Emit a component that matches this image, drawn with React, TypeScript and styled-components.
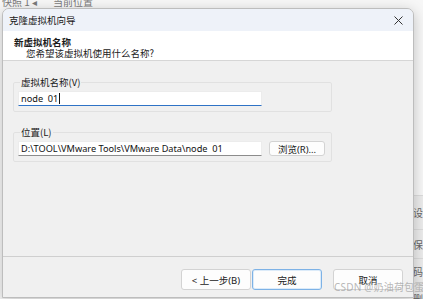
import React from "react";
import styled, { createGlobalStyle } from "styled-components";

const Global = createGlobalStyle`
  html, body { margin: 0; padding: 0; }
  body {
    background: #f6f6f6;
    font-family: "Noto Sans", "Noto Sans CJK SC", sans-serif;
  }
  * { box-sizing: border-box; }
`;

const Desktop = styled.div`
  position: relative;
  width: 423px;
  height: 299px;
  overflow: hidden;
  background: #f7f7f7;
  display: flex;
  flex-direction: column;
`;

const TopStrip = styled.div`
  display: flex;
  gap: 16px;
  margin-top: -6px;
  padding-left: 2px;
  height: 16px;
  font-size: 10px;
  line-height: 16px;
  color: #7a7a7a;
  font-family: "Noto Sans CJK SC", sans-serif;
`;

const SideColumn = styled.div`
  margin-left: auto;
  margin-top: 185px;
  width: 10px;
  display: flex;
  flex-direction: column;
  background: #ececec;
  flex: 1;
`;

const SideRow = styled.div<{ $h: number }>`
  height: ${(p) => p.$h}px;
  flex-shrink: 0;
  border-top: 1px solid #dcdcdc;
  font-size: 10px;
  line-height: ${(p) => p.$h}px;
  color: #666;
  white-space: nowrap;
  overflow: hidden;
  font-family: "Noto Sans CJK SC", sans-serif;
`;

const Window = styled.div`
  position: absolute;
  left: 2px;
  top: 8px;
  width: 412px;
  height: 290px;
  border: 1px solid #bdbdbd;
  border-radius: 7px 7px 0 0;
  background: #f0f0f0;
  box-shadow: 0 3px 14px rgba(0, 0, 0, 0.22);
  display: flex;
  flex-direction: column;
  overflow: hidden;
  font-size: 9.5px;
  color: #1a1a1a;
`;

const TitleBar = styled.div`
  height: 22px;
  background: #eef2f9;
  display: flex;
  align-items: center;
  justify-content: space-between;
  padding: 0 8px 0 6px;
  font-family: "Noto Sans CJK SC", sans-serif;
  font-size: 9.5px;
`;

const CloseBtn = styled.div`
  width: 14px;
  height: 14px;
  display: flex;
  align-items: center;
  justify-content: center;
`;

const Header = styled.div`
  background: #ffffff;
  height: 30px;
  padding: 6px 0 0 11px;
  border-bottom: 1px solid #d6d6d6;
  font-family: "Noto Sans CJK SC", sans-serif;
  line-height: 11px;
`;

const Heading = styled.div`
  font-weight: 700;
`;

const SubHeading = styled.div`
  padding-left: 12px;
  color: #222;
`;

const Body = styled.div`
  flex: 1;
  padding: 15px 0 0 10px;
  display: flex;
  flex-direction: column;
  gap: 14px;
  border-bottom: 1px solid #cfcfcf;
`;

const Group = styled.fieldset`
  width: 319px;
  margin: 0;
  padding: 3px 0 5px 4px;
  border: 1px solid #e1e1e1;
  border-radius: 2px;
`;

const Legend = styled.legend`
  padding: 0 1px;
  margin-left: 2px;
  line-height: 12px;
  font-family: "Noto Sans CJK SC", sans-serif;
  font-size: 9.5px;
`;

const FieldRow = styled.div`
  display: flex;
  gap: 7px;
  align-items: center;
`;

const Field = styled.div<{ $focused?: boolean }>`
  width: 244px;
  height: 15px;
  background: #ffffff;
  border: 1px solid #ececec;
  border-bottom: 1px solid ${(p) => (p.$focused ? "#2f73c6" : "#8c8c8c")};
  padding-left: 2px;
  display: flex;
  align-items: center;
  white-space: pre;
  font-size: 9.2px;
  color: #111;
`;

const Caret = styled.span`
  display: inline-block;
  width: 1px;
  height: 11px;
  background: #111;
  margin-left: 1px;
`;

const Button = styled.div<{ $primary?: boolean; $w: number; $h: number }>`
  width: ${(p) => p.$w}px;
  height: ${(p) => p.$h}px;
  background: #fdfdfd;
  border: 1px solid ${(p) => (p.$primary ? "#7db2e6" : "#d3d3d3")};
  box-shadow: ${(p) => (p.$primary ? "inset 0 0 0 1px #dcebf9" : "none")};
  border-radius: 3px;
  display: flex;
  align-items: center;
  justify-content: center;
  font-family: "Noto Sans", "Noto Sans CJK SC", sans-serif;
  font-size: 9.5px;
  color: #1a1a1a;
`;

const Footer = styled.div`
  height: 40px;
  display: flex;
  align-items: flex-start;
  justify-content: flex-end;
  padding: 12px 10px 0 0;
`;

const ButtonPair = styled.div`
  display: flex;
  gap: 1px;
  margin-right: 11px;
`;

const Watermark = styled.div`
  position: absolute;
  left: 334px;
  top: 280px;
  font-size: 10px;
  line-height: 14px;
  color: rgba(160, 160, 160, 0.75);
  font-family: "Noto Sans", "Noto Sans CJK SC", sans-serif;
  white-space: nowrap;
  letter-spacing: 0.2px;
`;

export default function App() {
  return (
    <>
      <Global />
      <Desktop>
        <TopStrip>
          <span>快照 1 ◂</span>
          <span>当前位置</span>
        </TopStrip>
        <SideColumn>
          <SideRow $h={34}>设也</SideRow>
          <SideRow $h={29}>保</SideRow>
          <SideRow $h={25}>码P</SideRow>
          <SideRow $h={30}>删</SideRow>
        </SideColumn>
        <Window>
          <TitleBar>
            <span>克隆虚拟机向导</span>
            <CloseBtn>
              <svg width="9" height="9" viewBox="0 0 9 9">
                <path d="M0.5 0.5 L8.5 8.5 M8.5 0.5 L0.5 8.5" stroke="#333" strokeWidth="1" />
              </svg>
            </CloseBtn>
          </TitleBar>
          <Header>
            <Heading>新虚拟机名称</Heading>
            <SubHeading>您希望该虚拟机使用什么名称?</SubHeading>
          </Header>
          <Body>
            <Group>
              <Legend>虚拟机名称(V)</Legend>
              <Field $focused>
                node  01
                <Caret />
              </Field>
            </Group>
            <Group>
              <Legend>位置(L)</Legend>
              <FieldRow>
                <Field>{"D:\\TOOL\\VMware Tools\\VMware Data\\node  01"}</Field>
                <Button $w={56} $h={15}>浏览(R)...</Button>
              </FieldRow>
            </Group>
          </Body>
          <Footer>
            <ButtonPair>
              <Button $w={70} $h={21}>&lt; 上一步(B)</Button>
              <Button $w={70} $h={21} $primary>完成</Button>
            </ButtonPair>
            <Button $w={70} $h={21}>取消</Button>
          </Footer>
        </Window>
        <Watermark>CSDN @奶油荷包蛋</Watermark>
      </Desktop>
    </>
  );
}
